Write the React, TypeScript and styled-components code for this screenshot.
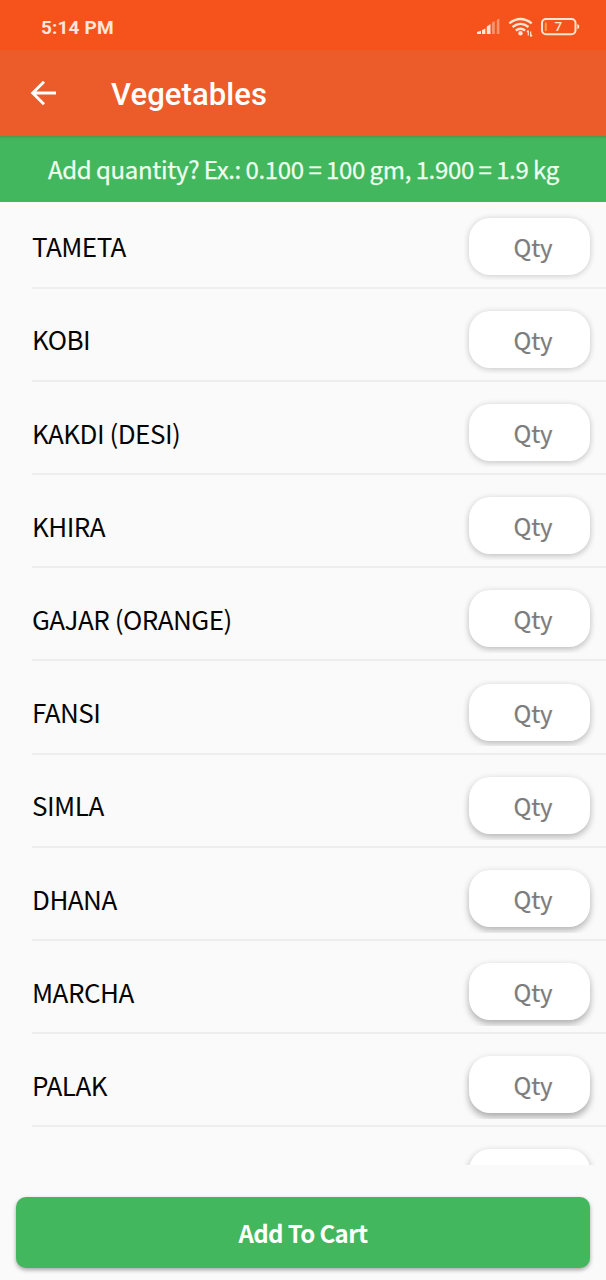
import React from "react";
import styled, { createGlobalStyle } from "styled-components";

const GlobalStyle = createGlobalStyle`
  * { box-sizing: border-box; }
  body { margin: 0; background: #fafafa; }
`;

const Screen = styled.main`
  display: flex;
  flex-direction: column;
  width: 606px;
  height: 1280px;
  overflow: hidden;
  background: #fafafa;
  color: #050505;
  font-family: "Noto Sans CJK SC", "Noto Sans", sans-serif;
`;

const StatusBar = styled.header`
  flex: none;
  display: flex;
  align-items: center;
  justify-content: space-between;
  height: 50px;
  padding: 4px 26px 0 41px;
  background: #f5531b;
`;

const Clock = styled.time`
  padding-top: 1px;
  font: 700 19px/24px Roboto, sans-serif;
  letter-spacing: 0.15px;
  color: #ffe6da;
`;

const AppBar = styled.nav`
  flex: none;
  display: flex;
  align-items: center;
  gap: 51px;
  height: 86px;
  padding: 2px 27px 0;
  background: #eb5c2a;
`;

const BackButton = styled.button`
  display: flex;
  padding: 0 0 3px;
  border: 0;
  background: none;
`;

const Title = styled.h1`
  margin: 0;
  padding-top: 2px;
  font: 500 31px/40px Roboto, sans-serif;
  letter-spacing: 0.1px;
  color: #fff;
`;

const Banner = styled.p`
  flex: none;
  margin: 0;
  height: 66px;
  padding-left: 1px;
  background: linear-gradient(#4a9a4e, #42b75d 3px);
  color: #effff0;
  font-size: 24px;
  letter-spacing: -0.34px;
  word-spacing: -0.4px;
  line-height: 65px;
  text-align: center;
  white-space: nowrap;
  -webkit-text-stroke: 0.25px #effff0;
`;

const ListViewport = styled.section`
  flex: none;
  height: 963px;
  overflow: hidden;
`;

const List = styled.ul`
  margin: -6.6px 0 0;
  padding: 0 0 0 32px;
  list-style: none;
`;

const Row = styled.li`
  display: flex;
  justify-content: space-between;
  height: 93.2px;
  border-bottom: 2px solid #eeeeee;
`;

const Name = styled.span`
  padding-top: 30.9px;
  font-size: 26px;
  letter-spacing: -0.5px;
  line-height: 40px;
`;

const QtySlot = styled.div`
  width: 149px;
  height: 85px;
  padding: 22.200px 16px 0 12px;
  overflow: hidden;
`;

const QtyField = styled.div<{ $depth: number }>`
  height: 57px;
  padding-left: 7px;
  border-radius: 21px;
  background: #fff;
  box-shadow:
    0 ${(p) => 1 + p.$depth * 4}px ${(p) => 6 + p.$depth * 2}px rgba(0, 0, 0, ${(p) => 0.15 + p.$depth * 0.15}),
    0 0 7px rgba(0, 0, 0, 0.06);
  color: #7c7c7c;
  font-size: 24px;
  letter-spacing: -0.1px;
  line-height: 57px;
  text-align: center;
  -webkit-text-stroke: 0.2px #7c7c7c;
`;

const Footer = styled.footer`
  flex: none;
  padding: 32px 16px 12px;
`;

const CartButton = styled.button`
  display: block;
  width: 100%;
  height: 71px;
  padding: 0;
  border: 0;
  border-radius: 10px;
  background: #42b75d;
  box-shadow: 0 2px 4px rgba(0, 0, 0, 0.35);
  color: #fff;
  font: 700 24px/72px "Noto Sans CJK SC", "Noto Sans", sans-serif;
  letter-spacing: -0.6px;
`;

const vegetables = [
  "TAMETA",
  "KOBI",
  "KAKDI (DESI)",
  "KHIRA",
  "GAJAR (ORANGE)",
  "FANSI",
  "SIMLA",
  "DHANA",
  "MARCHA",
  "PALAK",
  "",
];

function StatusIcons() {
  return (
    <svg width="104" height="24" viewBox="476 15 104 24" fill="none">
      <g fill="#ffe3d3">
        <path d="M477 34v-2l4-1.300v3.300zM482 34v-4l3.400-1.500v5.500zM486.800 34v-7.500l3.700-2.500v10z" />
        <path opacity=".45" d="M492 22.500l2.800-1.500v13h-2.800zM496.800 20l2.600-1.500v15.500h-2.600z" />
      </g>
      <g stroke="#ffe3d3" strokeWidth="2.300">
        <path d="M509.300 23.300q11.200-8.600 22.400 0M512.500 27q8-6.200 16 0M515.800 30.500q4.700-3.600 9.400 0" />
      </g>
      <circle cx="520.500" cy="33.300" r="2.200" fill="#ffe3d3" />
      <path d="M528.300 30.500v5M530.700 31.500v5M526.900 32l1.400-1.600M532.100 35l-1.400 1.600" stroke="#ffe3d3" strokeWidth="1.200" />
      <rect x="542" y="19" width="33.500" height="15.200" rx="4" stroke="#ffe3d3" strokeWidth="2" />
      <rect x="544.800" y="22.500" width="2" height="8.500" rx=".6" fill="#ffa044" />
      <path d="M577.300 24v5.200q2-.6 2-2.600t-2-2.600z" fill="#ffe3d3" />
      <text x="558.300" y="31.400" textAnchor="middle" fill="#ffe3d3" fontFamily="Roboto, sans-serif" fontSize="13.500" fontWeight="500">
        7
      </text>
    </svg>
  );
}

export default function App() {
  return (
    <Screen>
      <GlobalStyle />
      <StatusBar>
        <Clock>5:14 PM</Clock>
        <StatusIcons />
      </StatusBar>
      <AppBar>
        <BackButton aria-label="Back">
          <svg width="33" height="32" viewBox="0 0 33 32" fill="none" stroke="#fff" strokeWidth="2.900">
            <path d="M29 16H6M17 4.700L5.700 16L17 27.300" />
          </svg>
        </BackButton>
        <Title>Vegetables</Title>
      </AppBar>
      <Banner>Add quantity? Ex.: 0.100 = 100 gm, 1.900 = 1.9 kg</Banner>
      <ListViewport>
        <List>
          {vegetables.map((name, i) => (
            <Row key={i}>
              <Name>{name}</Name>
              <QtySlot>
                <QtyField $depth={i / 10}>{name && "Qty"}</QtyField>
              </QtySlot>
            </Row>
          ))}
        </List>
      </ListViewport>
      <Footer>
        <CartButton>Add To Cart</CartButton>
      </Footer>
    </Screen>
  );
}
